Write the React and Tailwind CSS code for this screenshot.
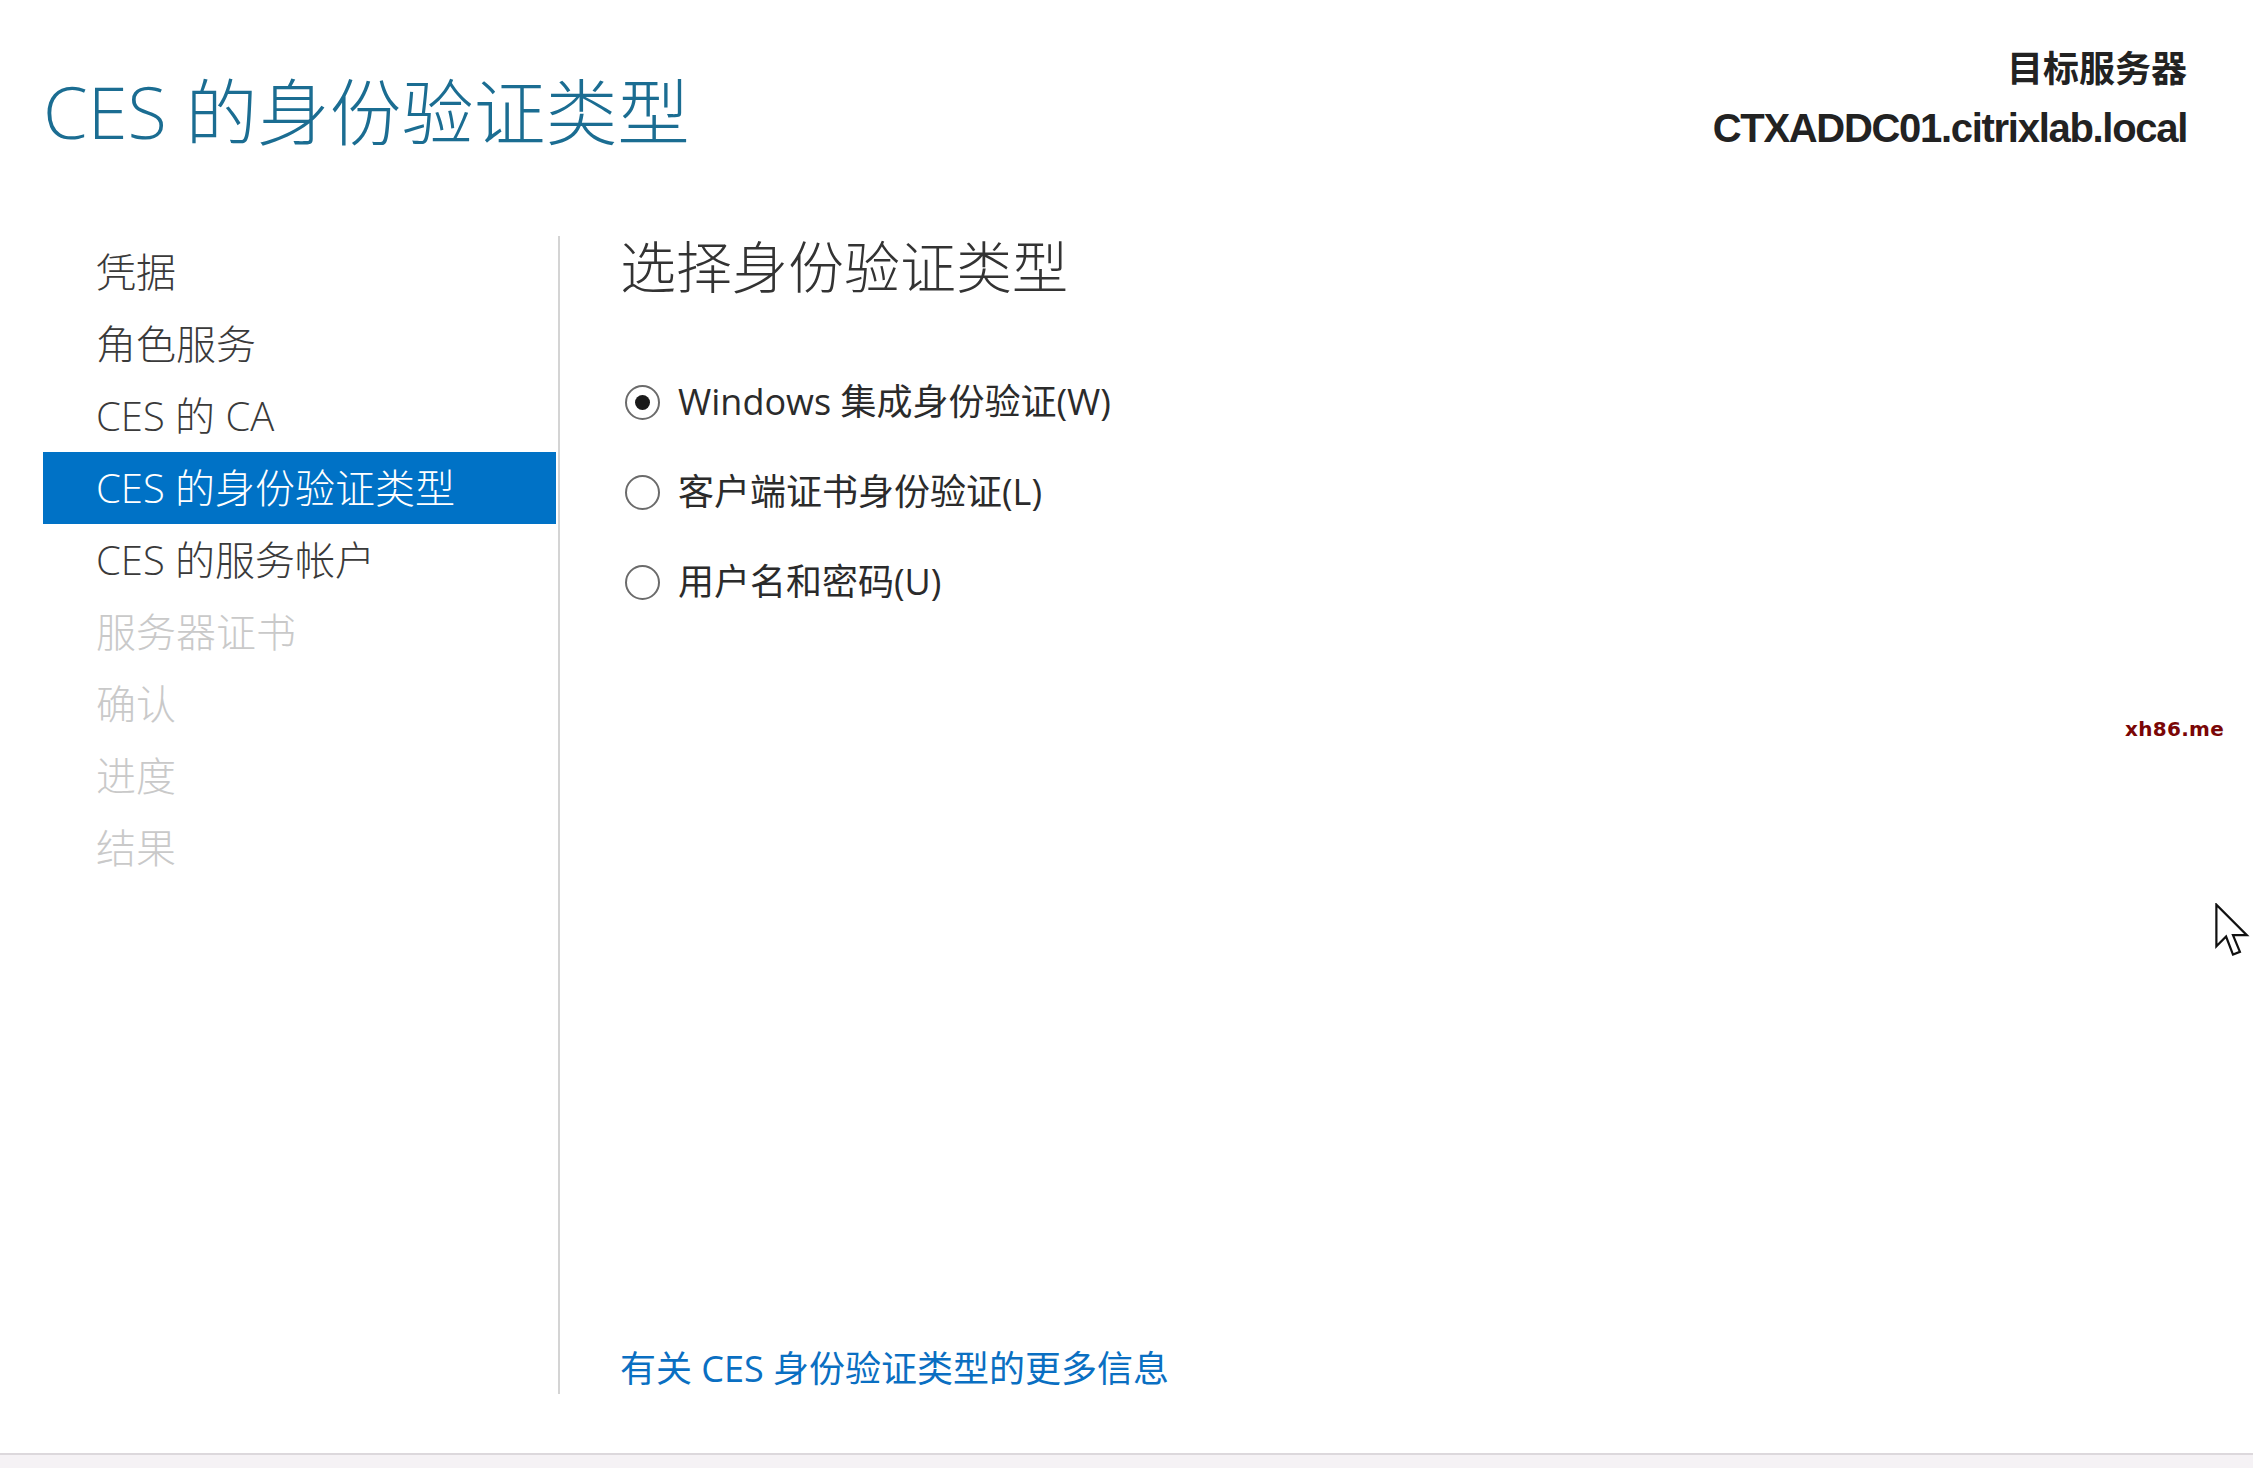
import { useState } from "react";

const navItems = [
  { label: "凭据", state: "done" },
  { label: "角色服务", state: "done" },
  { label: "CES 的 CA", state: "done" },
  { label: "CES 的身份验证类型", state: "active" },
  { label: "CES 的服务帐户", state: "done" },
  { label: "服务器证书", state: "disabled" },
  { label: "确认", state: "disabled" },
  { label: "进度", state: "disabled" },
  { label: "结果", state: "disabled" },
];

const options = [
  { id: "win", label: "Windows 集成身份验证(W)" },
  { id: "cert", label: "客户端证书身份验证(L)" },
  { id: "user", label: "用户名和密码(U)" },
];

const font = "font-['Open_Sans','Noto_Sans_CJK_SC',sans-serif]";

const Radio = ({ checked }) => (
  <span className="w-[35px] h-[35px] rounded-full border-2 border-[#6b6b6b] flex items-center justify-center shrink-0">
    {checked ? <span className="w-[15px] h-[15px] rounded-full bg-[#1a1a1a]" /> : null}
  </span>
);

const Cursor = () => (
  <svg width="36" height="56" viewBox="0 0 13 20" className="absolute left-[2215px] top-[903px]">
    <path
      d="M0.5 0.5 L0.5 15.5 L4 12 L6.5 18.5 L9 17.5 L6.5 11.5 L11.5 11.5 Z"
      fill="#fff"
      stroke="#111"
      strokeWidth="0.8"
      strokeLinejoin="miter"
    />
  </svg>
);

const App = () => {
  const [selected, setSelected] = useState("win");

  return (
    <div className={`relative w-[2253px] h-[1468px] bg-white flex flex-col overflow-hidden ${font}`}>
      <header className="h-[236px] flex justify-between shrink-0">
        <h1 className="pl-[43px] pt-[75px] text-[72px] leading-none font-light text-[#1b6d92]">
          CES 的身份验证类型
        </h1>
        <div className="pr-[66px] pt-[48px] flex flex-col items-end gap-[24px] text-[#222]">
          <div className="text-[36px] leading-none font-['Noto_Sans_CJK_SC',sans-serif] font-bold">目标服务器</div>
          <div className="text-[40px] leading-none font-['Liberation_Sans',sans-serif] font-bold tracking-[-1.3px]">
            CTXADDC01.citrixlab.local
          </div>
        </div>
      </header>

      <div className="h-[1158px] flex shrink-0">
        <nav className="w-[558px] pl-[43px] flex flex-col">
          {navItems.map(item => (
            <div
              key={item.label}
              className={`h-[72px] w-[513px] pl-[53px] flex items-center text-[40px] leading-none font-light ${
                item.state === "active"
                  ? "bg-[#0072c6] text-white"
                  : item.state === "disabled"
                  ? "text-[#c9c9c9]"
                  : "text-[#3a3a3a]"
              }`}
            >
              {item.label}
            </div>
          ))}
        </nav>
        <div className="w-[2px] bg-[#d4d4d4]" />
        <main className="flex-1 pl-[60px] flex flex-col">
          <h2 className="mt-[2px] text-[56px] leading-none font-light text-[#333]">选择身份验证类型</h2>
          <div className="mt-[63px] flex flex-col">
            {options.map(opt => (
              <label
                key={opt.id}
                className="h-[90px] flex items-center gap-[18px] ml-[5px] cursor-default"
                onClick={() => setSelected(opt.id)}
              >
                <Radio checked={selected === opt.id} />
                <span className="text-[36px] leading-none text-[#2b2b2b]">{opt.label}</span>
              </label>
            ))}
          </div>
          <a className="mt-auto mb-[7px] text-[36px] leading-none text-[#0a6fc2]">
            有关 CES 身份验证类型的更多信息
          </a>
        </main>
      </div>

      <div className="flex-1" />
      <div className="h-[15px] border-t-2 border-[#dcd8dc] bg-[#f5f2f5] shrink-0" />

      <span className="absolute left-[2125px] top-[714px] text-[20px] font-bold font-['DejaVu_Sans',sans-serif] text-[#7a0606] tracking-[0.3px]">
        xh86.me
      </span>
      <Cursor />
    </div>
  );
};

export default App;
